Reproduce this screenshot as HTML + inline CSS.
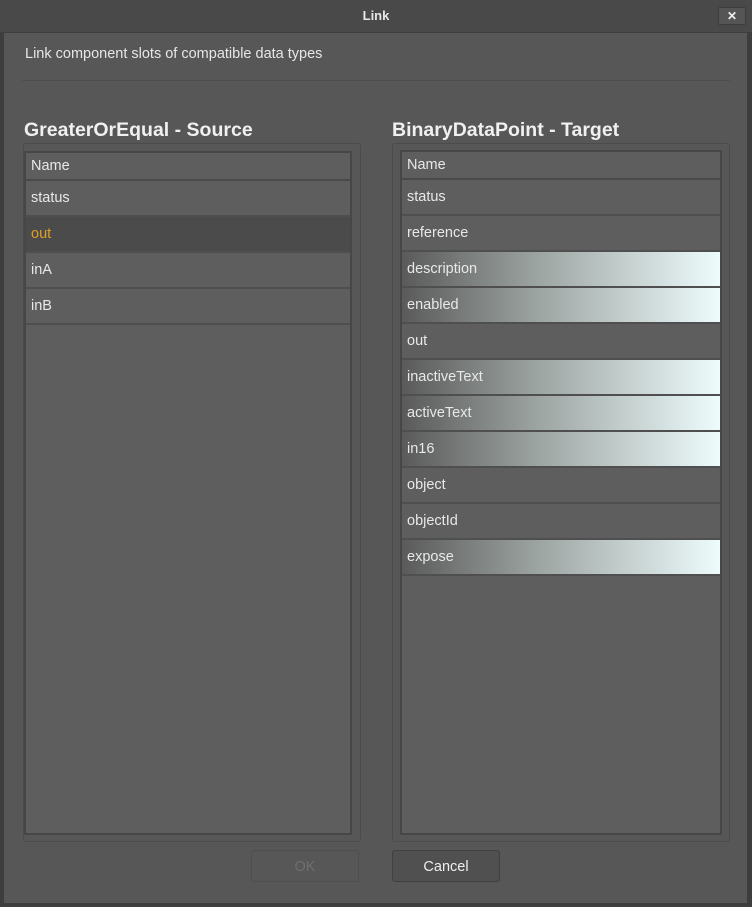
<!DOCTYPE html>
<html><head><style>
body{margin:0;width:752px;height:907px;background:#3e3e3e;font-family:"Liberation Sans",sans-serif;overflow:hidden;position:relative}
.title{position:absolute;left:0;top:0;width:752px;height:32px;background:#494949;color:#e8e8e8;font-weight:bold;font-size:13px;text-align:center;line-height:32px}
.x{position:absolute;right:6px;top:7px;width:26px;height:16px;background:#555;border:1px solid #3c3c3c;border-radius:2px;color:#eee;font-size:12px;line-height:16px;text-align:center;font-weight:bold}
.dlg{position:absolute;left:3px;top:32px;width:743px;height:870px;background:#575757;border:1px solid #3e3e3e}
.desc{position:absolute;left:25px;top:46px;color:#e6e6e6;font-size:14.5px}
.sep{position:absolute;left:22px;top:80px;width:708px;height:1px;background:#4e4e4e}
.h{position:absolute;top:119px;color:#f0f0f0;font-weight:bold;font-size:19.5px}
.ob{position:absolute;border:1px solid #4b4b4b;border-radius:3px;background:#575757}
.lst{position:absolute;background:#5e5e5e;border:2px solid #474747;box-sizing:border-box}
.r{height:36px;border-bottom:2px solid #4f4f4f;box-sizing:border-box;color:#e8e8e8;font-size:14.5px;padding-left:5px;line-height:34px}
.hd{height:28px;line-height:26px;border-bottom:2px solid #4a4a4a;box-sizing:border-box}
.sel{background:#4b4b4b;color:#e0a020}
.g{background:linear-gradient(to right,#5a5a5a,#a0a8a6 45%,#eefcfc)}
.btn{position:absolute;top:850px;width:108px;height:32px;border:1px solid #454545;border-radius:3px;text-align:center;line-height:32px;font-size:14.5px;box-sizing:border-box}
</style></head><body>
<div class="title">Link<div class="x">✕</div></div>
<div class="dlg"></div>
<div class="desc">Link component slots of compatible data types</div>
<div class="sep"></div>
<div class="h" style="left:24px">GreaterOrEqual - Source</div>
<div class="h" style="left:392px">BinaryDataPoint - Target</div>
<div class="ob" style="left:23px;top:143px;width:336px;height:697px"></div>
<div class="ob" style="left:392px;top:143px;width:336px;height:697px"></div>
<div class="lst" style="left:24px;top:151px;width:328px;height:684px">
<div class="r hd">Name</div>
<div class="r">status</div>
<div class="r sel">out</div>
<div class="r">inA</div>
<div class="r">inB</div>
</div>
<div class="lst" style="left:400px;top:150px;width:322px;height:685px">
<div class="r hd">Name</div>
<div class="r">status</div>
<div class="r">reference</div>
<div class="r g">description</div>
<div class="r g">enabled</div>
<div class="r">out</div>
<div class="r g">inactiveText</div>
<div class="r g">activeText</div>
<div class="r g">in16</div>
<div class="r">object</div>
<div class="r">objectId</div>
<div class="r g">expose</div>
</div>
<div class="btn" style="left:251px;color:#6e6e6e;border-color:#4e4e4e">OK</div>
<div class="btn" style="left:392px;color:#eee;background:#505050;border-color:#404040">Cancel</div>
</body></html>
